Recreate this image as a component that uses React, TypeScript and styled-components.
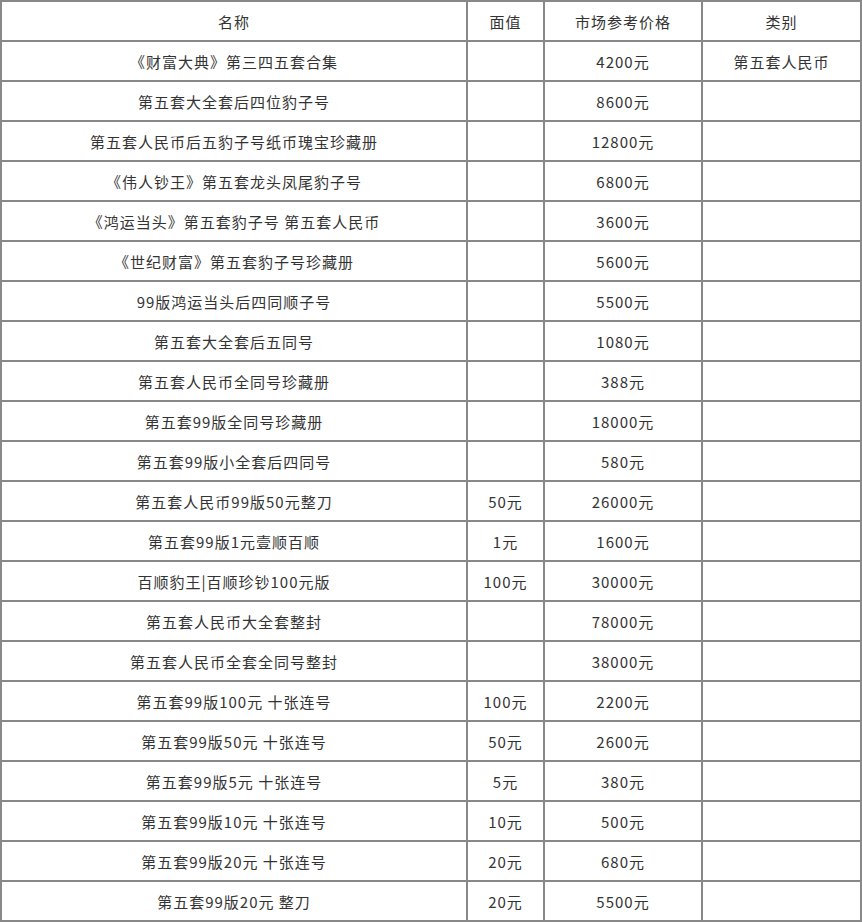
import styled, { createGlobalStyle } from 'styled-components';

interface Item {
  name: string;
  face: string;
  price: string;
  kind: string;
}

const items: Item[] = [
  { name: '《财富大典》第三四五套合集', face: '', price: '4200元', kind: '第五套人民币' },
  { name: '第五套大全套后四位豹子号', face: '', price: '8600元', kind: '' },
  { name: '第五套人民币后五豹子号纸币瑰宝珍藏册', face: '', price: '12800元', kind: '' },
  { name: '《伟人钞王》第五套龙头凤尾豹子号', face: '', price: '6800元', kind: '' },
  { name: '《鸿运当头》第五套豹子号 第五套人民币', face: '', price: '3600元', kind: '' },
  { name: '《世纪财富》第五套豹子号珍藏册', face: '', price: '5600元', kind: '' },
  { name: '99版鸿运当头后四同顺子号', face: '', price: '5500元', kind: '' },
  { name: '第五套大全套后五同号', face: '', price: '1080元', kind: '' },
  { name: '第五套人民币全同号珍藏册', face: '', price: '388元', kind: '' },
  { name: '第五套99版全同号珍藏册', face: '', price: '18000元', kind: '' },
  { name: '第五套99版小全套后四同号', face: '', price: '580元', kind: '' },
  { name: '第五套人民币99版50元整刀', face: '50元', price: '26000元', kind: '' },
  { name: '第五套99版1元壹顺百顺', face: '1元', price: '1600元', kind: '' },
  { name: '百顺豹王|百顺珍钞100元版', face: '100元', price: '30000元', kind: '' },
  { name: '第五套人民币大全套整封', face: '', price: '78000元', kind: '' },
  { name: '第五套人民币全套全同号整封', face: '', price: '38000元', kind: '' },
  { name: '第五套99版100元 十张连号', face: '100元', price: '2200元', kind: '' },
  { name: '第五套99版50元 十张连号', face: '50元', price: '2600元', kind: '' },
  { name: '第五套99版5元 十张连号', face: '5元', price: '380元', kind: '' },
  { name: '第五套99版10元 十张连号', face: '10元', price: '500元', kind: '' },
  { name: '第五套99版20元 十张连号', face: '20元', price: '680元', kind: '' },
  { name: '第五套99版20元 整刀', face: '20元', price: '5500元', kind: '' },
];

const GlobalStyle = createGlobalStyle`
  body {
    margin: 0;
    background: #fff;
    font-family: "Noto Sans CJK SC", "Microsoft YaHei", sans-serif;
  }
`;

const PriceTable = styled.table`
  width: 862px;
  border-collapse: collapse;
  table-layout: fixed;
  font-size: 15px;
  letter-spacing: 1px;
  color: #333;
`;

const Cell = styled.td<{ $w?: number }>`
  height: 38px;
  padding: 0;
  border: 2px solid #888;
  text-align: center;
  vertical-align: middle;
  white-space: nowrap;
  ${(p) => (p.$w ? `width: ${p.$w}px;` : '')}
`;

const HeadCell = styled(Cell).attrs({ as: 'th' })`
  font-weight: normal;
`;

const App = () => {
  return (
    <>
      <GlobalStyle />
      <PriceTable>
        <thead>
          <tr>
            <HeadCell $w={464}>名称</HeadCell>
            <HeadCell $w={75}>面值</HeadCell>
            <HeadCell $w={156}>市场参考价格</HeadCell>
            <HeadCell>类别</HeadCell>
          </tr>
        </thead>
        <tbody>
          {items.map((item) => (
            <tr key={item.name}>
              <Cell>{item.name}</Cell>
              <Cell>{item.face}</Cell>
              <Cell>{item.price}</Cell>
              <Cell>{item.kind}</Cell>
            </tr>
          ))}
        </tbody>
      </PriceTable>
    </>
  );
};

export default App;
